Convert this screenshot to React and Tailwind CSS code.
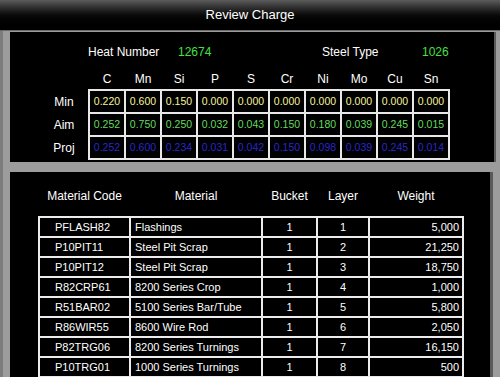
const elements = ['C', 'Mn', 'Si', 'P', 'S', 'Cr', 'Ni', 'Mo', 'Cu', 'Sn'];

const chem = [
  {
    label: 'Min',
    color: 'text-[#f6f49c]',
    values: ['0.220', '0.600', '0.150', '0.000', '0.000', '0.000', '0.000', '0.000', '0.000', '0.000'],
  },
  {
    label: 'Aim',
    color: 'text-[#62dc5e]',
    values: ['0.252', '0.750', '0.250', '0.032', '0.043', '0.150', '0.180', '0.039', '0.245', '0.015'],
  },
  {
    label: 'Proj',
    color: 'text-[#2828cc]',
    values: ['0.252', '0.600', '0.234', '0.031', '0.042', '0.150', '0.098', '0.039', '0.245', '0.014'],
  },
];

const materials = [
  { code: 'PFLASH82', name: 'Flashings', bucket: 1, layer: 1, weight: '5,000' },
  { code: 'P10PIT11', name: 'Steel Pit Scrap', bucket: 1, layer: 2, weight: '21,250' },
  { code: 'P10PIT12', name: 'Steel Pit Scrap', bucket: 1, layer: 3, weight: '18,750' },
  { code: 'R82CRP61', name: '8200 Series Crop', bucket: 1, layer: 4, weight: '1,000' },
  { code: 'R51BAR02', name: '5100 Series Bar/Tube', bucket: 1, layer: 5, weight: '5,800' },
  { code: 'R86WIR55', name: '8600 Wire Rod', bucket: 1, layer: 6, weight: '2,050' },
  { code: 'P82TRG06', name: '8200 Series Turnings', bucket: 1, layer: 7, weight: '16,150' },
  { code: 'P10TRG01', name: '1000 Series Turnings', bucket: 1, layer: 8, weight: '500' },
  { code: '', name: '', bucket: '', layer: '', weight: '' },
];

const cols = 'grid grid-cols-[89px_130px_53px_50px_92px] gap-x-[2px]';

export default function App() {
  return (
    <div
      className="h-[377px] w-[500px] overflow-hidden bg-[#9c9c9c] text-white"
      style={{ fontFamily: '"Liberation Sans", Arial, sans-serif' }}
    >
      {/* title bar */}
      <div className="flex h-[31px] items-center justify-center border-b border-[#6a6a6a] bg-gradient-to-b from-[#5c5c5c] via-[#0a0a0a] to-black text-[13px]">
        Review Charge
      </div>

      <div className="flex flex-col gap-[10px] border-l-[3px] border-[#7c7c7c] pl-[7px] pt-[1px]">
        {/* chemistry panel */}
        <div className="h-[130px] w-[484px] bg-black pt-[12px] shadow-[2px_0_0_#5a5a5a]">
          <div className="flex h-4 items-center text-[12px] leading-4">
            <span className="ml-[78px] w-[90px]">Heat Number</span>
            <span className="w-[144px] text-[#44e044]">12674</span>
            <span className="w-[100px]">Steel Type</span>
            <span className="text-[#44e044]">1026</span>
          </div>

          <div className="mt-[11px] ml-[78px] grid h-4 w-[362px] grid-cols-10 gap-x-[2px] px-[2px] text-center text-[12px] leading-4">
            {elements.map((el) => (
              <span key={el}>{el}</span>
            ))}
          </div>

          <div className="mt-[2px] flex">
            <div className="ml-[30px] flex w-[48px] flex-col gap-[2px] pt-[2px] text-center text-[12px]">
              {chem.map((row) => (
                <div key={row.label} className="flex h-[21px] items-center justify-center">
                  {row.label}
                </div>
              ))}
            </div>
            <div className="grid w-[362px] grid-cols-10 gap-[2px] bg-[#e8e8e8] p-[2px] text-[10.5px]">
              {chem.map((row) =>
                row.values.map((v, i) => (
                  <div
                    key={row.label + i}
                    className={`flex h-[21px] items-center justify-center bg-black ${row.color}`}
                  >
                    {v}
                  </div>
                ))
              )}
            </div>
          </div>
        </div>

        {/* materials panel */}
        <div className="h-[220px] w-[480px] bg-black pt-4 shadow-[3px_0_0_#5a5a5a]">
          <div className={`${cols} ml-[28px] h-4 px-[2px] text-center text-[12px] leading-4`}>
            <span>Material Code</span>
            <span>Material</span>
            <span>Bucket</span>
            <span>Layer</span>
            <span>Weight</span>
          </div>

          <div className={`${cols} mt-3 ml-[28px] w-fit gap-y-[2px] bg-[#ececec] p-[2px] text-[11px]`}>
            {materials.map((m, i) => (
              <div key={i} className="contents">
                <div className="flex h-[18px] items-center bg-black pl-[15px]">{m.code}</div>
                <div className="flex h-[18px] items-center bg-black pl-[4px]">{m.name}</div>
                <div className="flex h-[18px] items-center justify-center bg-black">{m.bucket}</div>
                <div className="flex h-[18px] items-center justify-center bg-black">{m.layer}</div>
                <div className="flex h-[18px] items-center justify-end bg-black pr-[3px]">{m.weight}</div>
              </div>
            ))}
          </div>
        </div>
      </div>
    </div>
  );
}
